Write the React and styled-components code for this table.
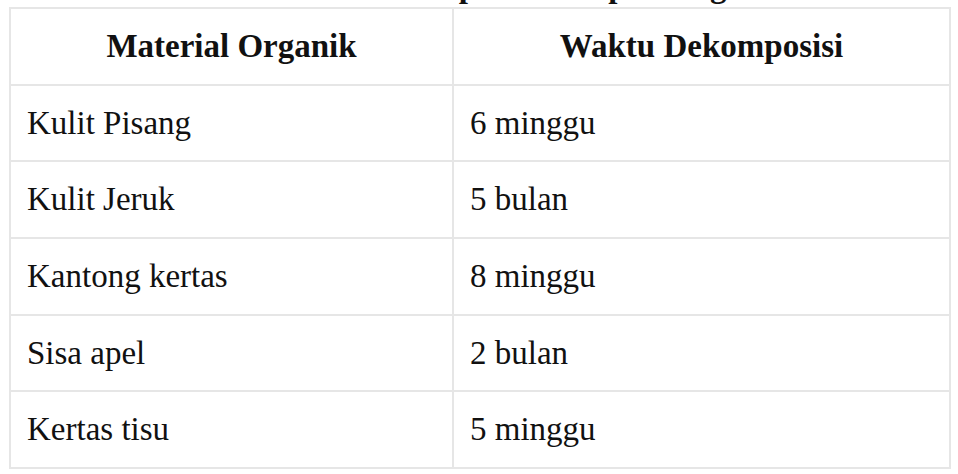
import React from "react";
import styled, { createGlobalStyle } from "styled-components";

const Global = createGlobalStyle`
  html, body { margin: 0; padding: 0; background: #ffffff; }
  body { overflow: hidden; font-family: "Liberation Serif", "Times New Roman", serif; color: #111111; }
`;

const Page = styled.div`
  width: 958px;
  height: 474px;
  overflow: hidden;
  background: #ffffff;
`;

const Title = styled.h2`
  margin: -34px 0 1px;
  height: 40px;
  font-size: 33px;
  line-height: 40px;
  font-weight: 700;
  text-align: center;
  color: #111111;
`;

const Table = styled.table`
  margin-left: 9px;
  width: 942px;
  border-collapse: separate;
  border-spacing: 0;
  border-top: 2px solid #e6e6e6;
  border-left: 2px solid #e6e6e6;
  table-layout: fixed;
`;

const Cell = styled.td`
  box-sizing: content-box;
  height: 74.7px;
  padding: 0 16px;
  border-right: 2px solid #e6e6e6;
  border-bottom: 2px solid #e6e6e6;
  font-size: 33px;
  font-weight: ${(p) => (p.$head ? 700 : 400)};
  text-align: ${(p) => (p.$head ? "center" : "left")};
  vertical-align: middle;
  white-space: nowrap;
  color: #111111;
`;

const rows = [
  ["Kulit Pisang", "6 minggu"],
  ["Kulit Jeruk", "5 bulan"],
  ["Kantong kertas", "8 minggu"],
  ["Sisa apel", "2 bulan"],
  ["Kertas tisu", "5 minggu"],
];

export default function App() {
  return (
    <Page>
      <Global />
      <Title>Tabel Waktu Dekomposisi Sampah Organik</Title>
      <Table>
        <colgroup>
          <col style={{ width: "443px" }} />
          <col />
        </colgroup>
        <thead>
          <tr>
            <Cell as="th" $head>Material Organik</Cell>
            <Cell as="th" $head>Waktu Dekomposisi</Cell>
          </tr>
        </thead>
        <tbody>
          {rows.map(([a, b]) => (
            <tr key={a}>
              <Cell>{a}</Cell>
              <Cell>{b}</Cell>
            </tr>
          ))}
        </tbody>
      </Table>
    </Page>
  );
}
